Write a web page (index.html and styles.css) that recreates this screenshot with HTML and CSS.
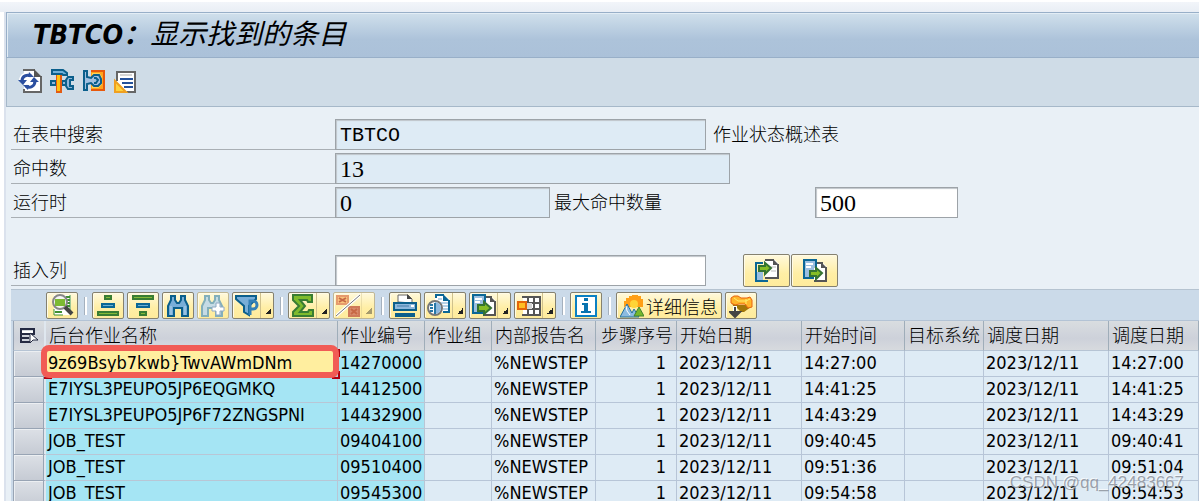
FILE: index.html
```html
<!DOCTYPE html>
<html lang="zh-CN">
<head>
<meta charset="utf-8">
<title>TBTCO：显示找到的条目</title>
<link rel="stylesheet" href="styles.css">
</head>
<body>
<main class="window">
  <header class="titlebar"><h1 class="title">TBTCO：<span class="title-cjk">显示找到的条目</span></h1></header>

  <nav class="appbar" aria-label="应用工具栏">
    <button class="app-btn" aria-label="刷新"><svg width="24" height="24" viewBox="0 0 24 24"><path d="M6 1h11l6 6v16H6z" fill="#fff"/><path d="M5 1h12M23 7v16H6v-3" fill="none" stroke="#666" stroke-width="2"/><path d="M16 0l8 8h-8z" fill="#555"/><path d="M4 12c0-5 5-7 9-5M17 12c0 5-5 8-9 5" fill="none" stroke="#fff" stroke-width="6"/><path d="M4 12c0-5 5-7 9-5M17 12c0 5-5 8-9 5" fill="none" stroke="#2b4fa0" stroke-width="3"/><path d="M0 11h9l-4 5zM12 13h9l-5-5zM11 3l5 5h-6zM10 21l-5-5h6z" fill="#2b4fa0"/></svg></button>
    <button class="app-btn" aria-label="工具"><svg width="24" height="24" viewBox="0 0 24 24"><path d="M1 12h5v4H1zM12 12h4v4h-4z" fill="#8fb6dc" stroke="#0b5f8c" stroke-width="2"/><path d="M23 8h-5l-2 3v6l2 3h5v-3h-3v-6h3z" fill="#8fb6dc" stroke="#0b5f8c" stroke-width="2"/><path d="M2 1h11l4 3v2h-4l-1-1H2z" fill="#6eb0da" stroke="#0b5f8c" stroke-width="2"/><path d="M6 6h6v18H6z" fill="#e35b12"/><path d="M7 6h3v16H7z" fill="#ffc20e"/></svg></button>
    <button class="app-btn" aria-label="检查"><svg width="24" height="24" viewBox="0 0 24 24"><path d="M9 2h13v19H9" fill="#ffa41c" stroke="#e8590c" stroke-width="2"/><path d="M10 5h7l2 3v7l-3 3h-6" fill="none" stroke="#ffd257" stroke-width="2"/><path d="M2 2h3v6l4 1 3-3h5l2 4v4l-3 3h-4l-3-3-4 1v6H2z" fill="#a2c0e0" stroke="#0b5f8c" stroke-width="2"/><path d="M12 9h2l2 2-2 3h-2" fill="none" stroke="#0b5f8c" stroke-width="2"/></svg></button>
    <button class="app-btn" aria-label="变式"><svg width="24" height="24" viewBox="0 0 24 24"><path d="M3 3h18v19H3z" fill="#fff"/><path d="M3 12V3h18v20h-8" fill="none" stroke="#666" stroke-width="2"/><path d="M6 6h12" stroke="#aaa"/><path d="M6 10h13M8 14h11M10 18h9" stroke="#24519b" stroke-width="2"/><path d="M1 12l11 11H1z" fill="#ffd33d" stroke="#f0a020" stroke-width="2"/></svg></button>
  </nav>

  <form class="form">
    <div class="row"><label class="label" for="tab">在表中搜索</label><input class="field w-table" id="tab" value="TBTCO" readonly><span class="note">作业状态概述表</span></div>
    <div class="row"><label class="label" for="hits">命中数</label><input class="field field-num w-hits" id="hits" value="13" readonly></div>
    <div class="row"><label class="label" for="run">运行时</label><input class="field field-num w-run" id="run" value="0" readonly><label class="sublabel" for="max">最大命中数量</label><input class="field field-num w-max" id="max" value="500"></div>
    <div class="row row-insert"><label class="label" for="ins">插入列</label><input class="field w-table" id="ins">
      <div class="pair">
        <button type="button" class="btn btn-big" aria-label="插入"><svg width="24" height="24" viewBox="0 0 24 24"><path d="M8 4H1v18h12" fill="none" stroke="#0b6796" stroke-width="2"/><path d="M2 13h6v8H2z" fill="#9bbfe0"/><path d="M10 1h10l4 4v13H10z" fill="#fff"/><path d="M10 1h9M23 5v14H10" fill="none" stroke="#555" stroke-width="2"/><path d="M18 0l6 6h-6z" fill="#555"/><path d="M16 8h5M16 12h5" stroke="#bbb"/><path d="M4 7h6V4l6 5-6 6v-3H4z" fill="#84bd26" stroke="#347332" stroke-width="2"/></svg></button>
        <button type="button" class="btn btn-big" aria-label="移出"><svg width="24" height="24" viewBox="0 0 24 24"><path d="M1 1h12v18H1z" fill="#9bbfe0" stroke="#0b6796" stroke-width="2"/><path d="M3 5h7M3 8h5" stroke="#fff" stroke-width="2"/><path d="M14 4h6l4 4v15H11V9h3z" fill="#fff"/><path d="M14 4h6M23 8v14H11" fill="none" stroke="#555" stroke-width="2"/><path d="M18 3l6 6h-6z" fill="#555"/><path d="M7 12h6V9l6 5-6 6v-3H7z" fill="#84bd26" stroke="#347332" stroke-width="2"/></svg></button>
      </div>
    </div>
  </form>

  <section class="grid">
    <div class="gridbar" role="toolbar">
      <button class="btn" aria-label="明细"><svg width="24" height="24" viewBox="0 0 24 24"><path d="M4 1h17v20H4z" fill="#fff"/><path d="M20 1v15M4 15v6h9" fill="none" stroke="#3f9031"/><path d="M16 3h4M17 6h3M17 9h3M17 12h3M5 18h7" stroke="#3f9031" stroke-width="2"/><circle cx="10" cy="8" r="7" fill="#f5f5f5" stroke="#888" stroke-width="2"/><path d="M5 5h10v7H5z" fill="#7cba32"/><path d="M15 13l7 7" stroke="#444" stroke-width="4"/></svg></button>
      <span class="sep"></span>
      <button class="btn" aria-label="升序"><svg width="24" height="24" viewBox="0 0 24 24"><path d="M9 2h6v3H9z" fill="#84b938" stroke="#397d33" stroke-width="2"/><path d="M6 10h12v3H6z" fill="#6dafd2" stroke="#0b6796" stroke-width="2"/><path d="M2 18h20v3H2z" fill="#84b938" stroke="#397d33" stroke-width="2"/></svg></button>
      <button class="btn" aria-label="降序"><svg width="24" height="24" viewBox="0 0 24 24"><path d="M2 2h20v3H2z" fill="#84b938" stroke="#397d33" stroke-width="2"/><path d="M6 10h12v3H6z" fill="#6dafd2" stroke="#0b6796" stroke-width="2"/><path d="M9 18h6v3H9z" fill="#84b938" stroke="#397d33" stroke-width="2"/></svg></button>
      <button class="btn" aria-label="查找"><svg width="24" height="24" viewBox="0 0 24 24"><path d="M5 2h4v4l2 3h2l2-3V2h4v4l3 6v10h-6v-8H8v8H2V12l3-6z" fill="#78aed8" stroke="#0b5f8c" stroke-width="2"/><path d="M5 12v9M19 12v9" stroke="#b6d4ea"/></svg></button>
      <button class="btn btn-faint" aria-label="查找下一个"><svg width="24" height="24" viewBox="0 0 24 24"><path d="M4 2h4v4l2 3h2l2-3V2h4v4l3 6v10h-6v-8H7v8H1V12l3-6z" fill="#c5dbe5" stroke="#83afba" stroke-width="2"/><path d="M15 9h4v4h4v4h-4v4h-4v-4h-4v-4h4z" fill="#fff" stroke="#8fa8c2"/></svg></button>
      <button class="btn btn-split" aria-label="过滤器"><svg width="24" height="24" viewBox="0 0 24 24"><path d="M1 2h20v3l-7 7v9l-5-3v-6L1 5z" fill="#78aed8" stroke="#0b5f8c" stroke-width="2"/><path d="M15 21V7h3a3 3 0 0 1 0 8h-3" fill="none" stroke="#3581b7" stroke-width="3"/></svg><span class="more"></span></button>
      <span class="sep"></span>
      <button class="btn btn-split" aria-label="总计"><svg width="24" height="24" viewBox="0 0 24 24"><path d="M2 1h19v7h-4l-1-2H9l5 6-5 6h8l1-2h4v6H2v-4l6-6-6-6z" fill="#7fbb2c" stroke="#397d33" stroke-width="2"/></svg><span class="more"></span></button>
      <button class="btn btn-split" aria-label="小计" disabled><svg width="24" height="24" viewBox="0 0 24 24"><path d="M1 2h11v8H1z" fill="#fac47c" stroke="#e69a6d" stroke-width="2"/><path d="M13 13h10v9H13z" fill="#d98b6b" stroke="#cf7a58" stroke-width="2"/><path d="M3 4l7 4M10 4L3 8M15 15l6 5M21 15l-6 5" stroke="#c76845" stroke-width="2"/><path d="M0 22L24 1" stroke="#fff" stroke-width="3"/><path d="M0 22L24 1" stroke="#777"/></svg><span class="more"></span></button>
      <span class="sep"></span>
      <button class="btn" aria-label="打印"><svg width="24" height="24" viewBox="0 0 24 24"><path d="M5 8V1h10l4 4v4z" fill="#fff" stroke="#666"/><path d="M14 0l5 5h-5z" fill="#444"/><path d="M1 9h22v7H1z" fill="#8eb8dd" stroke="#0b5f8c" stroke-width="2"/><path d="M4 12h12" stroke="#467da9"/><path d="M18 11h3v2h-3z" fill="#fff"/><path d="M3 20h18v2H3z" fill="#fff" stroke="#0b5f8c" stroke-width="2"/></svg></button>
      <button class="btn btn-split" aria-label="视图"><svg width="24" height="24" viewBox="0 0 24 24"><path d="M8 1h10l5 5v12H8z" fill="#fff"/><path d="M9 4V1h8M22 6v12h-6" fill="none" stroke="#0b6796" stroke-width="2"/><path d="M16 0l7 7h-7z" fill="#0b6796"/><path d="M11 5h4M14 9h7M16 12h5M16 15h5" stroke="#6ea5d0" stroke-width="1"/><circle cx="8" cy="14" r="7" fill="#fff" stroke="#777" stroke-width="2"/><path d="M8 8a6 6 0 0 1 0 12z" fill="#8eb8dd"/><path d="M3 11h3M3 14h3M3 17h3M8 9v11" stroke="#2877a6" stroke-width="2"/></svg><span class="more"></span></button>
      <button class="btn btn-split" aria-label="导出"><svg width="24" height="24" viewBox="0 0 24 24"><path d="M1 1h12v18H1z" fill="#9bbfe0" stroke="#0b6796" stroke-width="2"/><path d="M3 5h7M3 8h5" stroke="#fff" stroke-width="2"/><path d="M14 3h6l4 4v15H11V8h3z" fill="#fff"/><path d="M14 3h6M23 7v14H11" fill="none" stroke="#555" stroke-width="2"/><path d="M18 2l6 6h-6z" fill="#555"/><path d="M6 11h6V8l7 6-7 6v-3H6z" fill="#84bd26" stroke="#347332" stroke-width="2"/></svg><span class="more"></span></button>
      <button class="btn btn-split" aria-label="布局"><svg width="24" height="24" viewBox="0 0 24 24"><path d="M6 3h17v18H6z" fill="#fff"/><path d="M5 3h19M5 9h19M5 15h19M5 21h19M11 2v20M17 2v20M23 2v20" stroke="#555" stroke-width="2"/><path d="M9 9h6v6H9z" fill="#d4d4d4"/><path d="M1 8h8v7H1z" fill="#ffbe24" stroke="#e4650b" stroke-width="2"/></svg><span class="more"></span></button>
      <span class="sep"></span>
      <button class="btn" aria-label="信息"><svg width="24" height="24" viewBox="0 0 24 24"><path d="M2 2h20v20H2z" fill="#fff" stroke="#0b80c3" stroke-width="2"/><path d="M10 4h4v3h-4zM8 9h6v8h3v2H7v-2h3v-6H8z" fill="#0873af"/></svg></button>
      <span class="sep"></span>
      <button class="btn btn-text"><svg width="24" height="24" viewBox="0 0 24 24"><path d="M4 13V7h2V4h3V2h3V1h6v1h3v3h2v8H4z" fill="#ff9f16"/><circle cx="14" cy="10" r="4" fill="#ffd437"/><path d="M0 23l7-13 5 9 2-4 5 8z" fill="#8cbbe0" stroke="#236f9d"/><path d="M6 12l1 5 3 4" stroke="#fff" fill="none"/><path d="M14 22l5-9 5 9z" fill="#76b72c" stroke="#3f832e"/></svg>详细信息</button>
      <button class="btn" aria-label="选择"><svg width="24" height="24" viewBox="0 0 24 24"><path d="M3 9l5 2h8l6-2v4l-7 5h-3l-4-4H5z" fill="#a27609"/><path d="M2 4l3-2h4l3 2h6l3-1 2 3v7l-4 1-3-4H10l-4 1-4-2z" fill="#ffb52b" stroke="#e86311"/><path d="M5 4l4 3h8l4-2M17 5v5" fill="none" stroke="#fff06b"/><path d="M6 12v10" stroke="#fff" stroke-width="4"/><path d="M6 13v8M1 18h10l-5 5z" stroke="#444" stroke-width="2" fill="#444"/></svg></button>
    </div>

    <table class="table">
      <colgroup><col class="c-sel"><col class="c-name"><col class="c-no"><col class="c-grp"><col class="c-rep"><col class="c-step"><col class="c-date"><col class="c-time"><col class="c-sys"><col class="c-date"><col></colgroup>
      <thead>
        <tr><th class="selhead" aria-label="全选"><svg class="selicon" width="18" height="16" viewBox="0 0 18 16"><path d="M1 1h13v5H1zM1 6v8h9M1 10h8" fill="none" stroke="#252a42" stroke-width="2"/><path d="M2 3h11v2H2z" fill="#fff"/><path d="M10 5v10l3-3h5z" fill="#fff" stroke="#252a42"/></svg></th><th>后台作业名称</th><th>作业编号</th><th>作业组</th><th>内部报告名</th><th class="num">步骤序号</th><th>开始日期</th><th>开始时间</th><th class="num">目标系统</th><th>调度日期</th><th>调度日期</th></tr>
      </thead>
      <tbody>
        <tr><td class="sel"></td><td class="key current">9z69Bsyb7kwb}TwvAWmDNm<span class="cursor"></span><span class="mark"></span></td><td class="key">14270000</td><td></td><td>%NEWSTEP</td><td class="num step">1</td><td>2023/12/11</td><td>14:27:00</td><td></td><td>2023/12/11</td><td>14:27:00</td></tr>
        <tr><td class="sel"></td><td class="key">E7IYSL3PEUPO5JP6EQGMKQ</td><td class="key">14412500</td><td></td><td>%NEWSTEP</td><td class="num step">1</td><td>2023/12/11</td><td>14:41:25</td><td></td><td>2023/12/11</td><td>14:41:25</td></tr>
        <tr><td class="sel"></td><td class="key">E7IYSL3PEUPO5JP6F72ZNGSPNI</td><td class="key">14432900</td><td></td><td>%NEWSTEP</td><td class="num step">1</td><td>2023/12/11</td><td>14:43:29</td><td></td><td>2023/12/11</td><td>14:43:29</td></tr>
        <tr><td class="sel"></td><td class="key">JOB_TEST</td><td class="key">09404100</td><td></td><td>%NEWSTEP</td><td class="num step">1</td><td>2023/12/11</td><td>09:40:45</td><td></td><td>2023/12/11</td><td>09:40:41</td></tr>
        <tr><td class="sel"></td><td class="key">JOB_TEST</td><td class="key">09510400</td><td></td><td>%NEWSTEP</td><td class="num step">1</td><td>2023/12/11</td><td>09:51:36</td><td></td><td>2023/12/11</td><td>09:51:04</td></tr>
        <tr><td class="sel"></td><td class="key">JOB_TEST</td><td class="key">09545300</td><td></td><td>%NEWSTEP</td><td class="num step">1</td><td>2023/12/11</td><td>09:54:58</td><td></td><td>2023/12/11</td><td>09:54:53</td></tr>
      </tbody>
    </table>
  </section>
</main>
<div class="watermark">CSDN @qq_42483667</div>
</body>
</html>
```
FILE: styles.css
```css
* { box-sizing: border-box; }

html, body { height: 100%; }

body {
  margin: 0;
  padding: 12px 0 0 4px;
  overflow: hidden;
  background: linear-gradient(#fff 0, #fff 2px, #f2f5fa 2px, #e9eef5 12px, #fff 12px);
  color: #000;
  font-family: "DejaVu Sans Condensed", "DejaVu Sans", "Noto Sans CJK SC", sans-serif;
  font-size: 18px;
}

button, input { font: inherit; color: inherit; }
svg { display: block; flex: none; }

.window {
  min-height: 100%;
  border-left: 2px solid #dbe2ed;
  background: #e9f0f6;
}

.titlebar {
  height: 46px;
  padding-left: 26px;
  display: flex;
  align-items: center;
  border: 1px solid #98afc8;
  border-right: 0;
  background: linear-gradient(#d0e0ec, #adc3da 60%, #abc1d9);
  box-shadow: inset 1px 1px #e3edf5;
}

.title {
  margin: 0;
  font-size: 27px;
  line-height: 40px;
  font-style: italic;
  font-weight: 700;
}
.title-cjk { font-size: 28px; font-weight: 400; }

.appbar {
  height: 49px;
  padding: 0 11px 2px;
  display: flex;
  align-items: center;
  gap: 8px;
  border: 1px solid #a6b8c9;
  border-top: 0;
  border-right: 0;
  background: #cfdce7;
}

.app-btn { padding: 0; border: 0; background: none; }

.form {
  padding: 12px 0 3px 5px;
  display: flex;
  flex-direction: column;
  gap: 3px;
}

.row { height: 31px; display: flex; align-items: center; }
.row-insert { margin-top: 34px; }

.label {
  flex: 0 0 324px;
  height: 31px;
  padding-left: 2px;
  border-bottom: 1px solid #a9afb4;
  font-size: 18px;
  line-height: 31px;
  font-weight: 300;
}

.note, .sublabel { font-size: 18px; line-height: 31px; font-weight: 300; }
.note { padding-left: 7px; }
.sublabel { width: 265px; padding-left: 4px; }

.field {
  height: 31px;
  padding: 2px 4px 0;
  border: 1px solid #9da3a8;
  border-radius: 0;
  background: #fff;
  box-shadow: inset 1px 1px 1px #bfc5ca;
  font-family: "Liberation Mono", monospace;
  font-size: 20px;
  outline: 0;
}
.field-num { font-family: "Liberation Serif", serif; font-size: 24px; }
.field:read-only { background: #deebf5; }
.w-table { width: 371px; }
.w-hits { width: 395px; }
.w-run { width: 215px; }
.w-max { width: 143px; }

.pair { display: flex; gap: 1px; padding-left: 37px; }

.btn {
  width: 32px;
  height: 27px;
  padding: 0;
  display: flex;
  align-items: center;
  justify-content: center;
  border: 1px solid #85816f;
  border-radius: 2px;
  background: linear-gradient(#fff9dc, #ffeea5 60%, #feeb9c);
  box-shadow: inset 1px 1px #fffbe6;
}
.btn-big { width: 47px; height: 33px; }
.btn-split { width: 42px; justify-content: flex-start; padding-left: 2px; }
.btn:disabled, .btn-faint { border-color: #c0b795; }
.btn-text { width: 106px; gap: 2px; font-size: 18px; font-weight: 300; white-space: nowrap; }

.more {
  width: 13px;
  height: 25px;
  margin-left: 1px;
  border-left: 1px solid #cfc18c;
  background: linear-gradient(135deg, transparent 50%, #222 50%) 4px 15px / 6px 6px no-repeat;
}
.btn:disabled .more { opacity: 0.4; }

.grid { margin-left: 5px; }

.gridbar {
  height: 32px;
  padding: 2px 0 2px 35px;
  display: flex;
  gap: 3px;
  border-top: 1px solid #b5c3d0;
  border-bottom: 1px solid #b3c3d5;
  background: #cbdae9;
}

.sep {
  width: 8px;
  height: 18px;
  margin-top: 5px;
  background: linear-gradient(90deg, #a5b1be 1px, #fff 1px) 3px 0 / 3px 100% no-repeat;
}

.table {
  width: 100%;
  table-layout: fixed;
  border-collapse: separate;
  border-spacing: 0;
  border-left: 2px solid #cbdae9;
}
.c-sel { width: 33px; }
.c-name { width: 292px; }
.c-no { width: 87px; }
.c-grp { width: 67px; }
.c-rep { width: 104px; }
.c-step { width: 81px; }
.c-date { width: 125px; }
.c-time { width: 103px; }
.c-sys { width: 79px; }

.table th {
  height: 30px;
  padding: 0 3px;
  border-right: 1px solid #9fadb9;
  border-bottom: 1px solid #b6c4d4;
  background: linear-gradient(#d9dde0, #cdd1da 60%, #d7dade);
  font-size: 18px;
  line-height: 28px;
  font-weight: 300;
  text-align: left;
  white-space: nowrap;
}

.table td {
  height: 26px;
  padding: 0 2px 2px;
  border-right: 1px solid #b7c5d7;
  border-bottom: 1px solid #b7c5d7;
  background: #deebf5;
  line-height: 23px;
  white-space: nowrap;
}
.table .num { text-align: right; }
.table .step { padding-right: 10px; }
.table .key { background: #a5e5f4; border-color: #b9c6d5; }

.table .selhead, .table .sel {
  border-left: 1px solid #98a4b4;
  border-right: 2px solid #dfe7ef;
}
.table .sel {
  border-bottom: 1px solid #98a4b4;
  background: linear-gradient(#dce0e6, #c6cbd4);
  box-shadow: inset -1px 0 #98a4b4, inset 1px 1px #eceff2;
}
.selicon { margin: 0 auto; }

.table .current { position: relative; background: #ffee9f; }

.cursor, .mark { position: absolute; pointer-events: none; }
.cursor {
  inset: -2px -3px -3px -2px;
  background:
    linear-gradient(#b00010, #b00010) 0 100% / 8px 2px no-repeat,
    linear-gradient(#b00010, #b00010) 100% 100% / 8px 2px no-repeat,
    linear-gradient(#b00010, #b00010) 100% 100% / 2px 8px no-repeat,
    linear-gradient(#b00010, #b00010) 100% 0 / 2px 8px no-repeat;
}
.mark {
  inset: -6px -2px -2px -5px;
  border: 6px solid #f15b55;
  border-radius: 8px;
}

.watermark {
  position: absolute;
  right: 15px;
  bottom: 8px;
  font-family: "Liberation Sans", sans-serif;
  font-size: 17px;
  line-height: 20px;
  color: rgba(130, 135, 145, 0.75);
  text-shadow: -1px -1px rgba(255, 255, 255, 0.7);
}
```
